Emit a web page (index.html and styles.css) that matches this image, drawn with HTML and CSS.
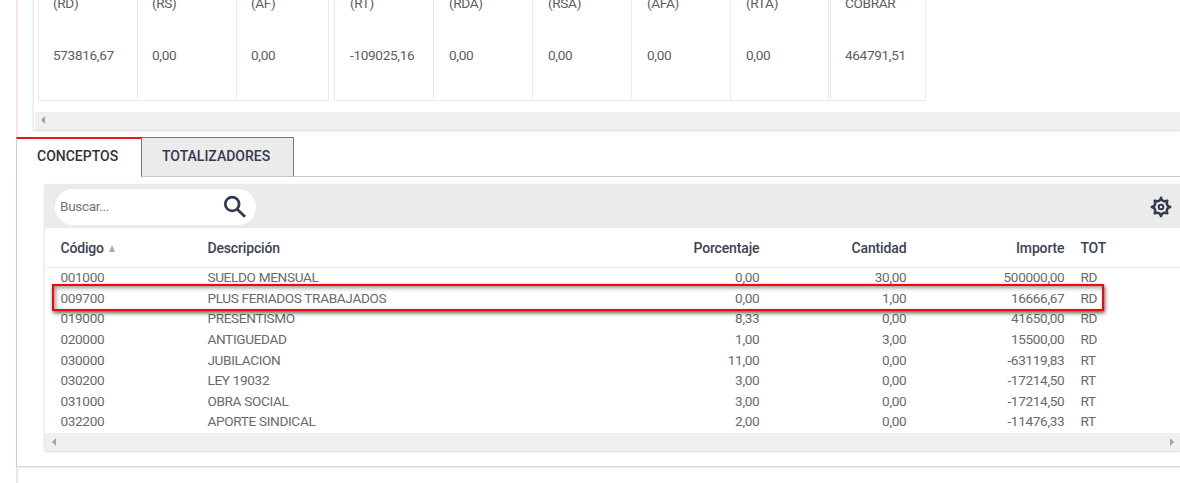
FILE: index.html
```html
<!DOCTYPE html>
<html lang="es">
<head>
<meta charset="utf-8">
<title>Conceptos</title>
<link rel="stylesheet" href="styles.css">
</head>
<body>
<section class="summary">
  <div class="summary-card">
    <div class="groups">
      <div class="group g1">
        <div class="cell"><span>(RD)</span><span>573816,67</span></div>
        <div class="cell"><span>(RS)</span><span>0,00</span></div>
        <div class="cell"><span>(AF)</span><span>0,00</span></div>
      </div>
      <div class="group g2">
        <div class="cell"><span>(RT)</span><span>-109025,16</span></div>
        <div class="cell"><span>(RDA)</span><span>0,00</span></div>
        <div class="cell"><span>(RSA)</span><span>0,00</span></div>
        <div class="cell"><span>(AFA)</span><span>0,00</span></div>
        <div class="cell"><span>(RTA)</span><span>0,00</span></div>
      </div>
      <div class="group g3">
        <div class="cell"><span>COBRAR</span><span>464791,51</span></div>
      </div>
    </div>
    <div class="scrollbar"><i class="arrow-left"></i></div>
  </div>
</section>
<nav class="tabs">
  <div class="tab active">CONCEPTOS</div>
  <div class="tab">TOTALIZADORES</div>
  <div class="tab-rest"></div>
</nav>
<main class="panel">
  <div class="grid-card">
    <div class="toolbar">
      <div class="search"><span>Buscar...</span>
        <svg width="24" height="24" viewBox="0 0 24 24" fill="none" stroke="#343a50" stroke-width="2.8"><circle cx="9.2" cy="9" r="6.9"/><path d="M14.2 14.2L22 21.8"/></svg>
      </div>
      <svg class="gear" width="22" height="22" viewBox="0 0 22 22" fill="none" stroke="#343a50" stroke-width="2.5" stroke-linejoin="round"><path d="M11 1.8Q11.8 4.6 13.4 5Q15 5.4 17.3 4.7Q16.6 7 17 8.6Q17.4 10.2 20.2 11Q17.4 11.8 17 13.4Q16.6 15 17.3 17.3Q15 16.6 13.4 17Q11.8 17.4 11 20.2Q10.2 17.4 8.6 17Q7 16.6 4.7 17.3Q5.4 15 5 13.4Q4.6 11.8 1.8 11Q4.6 10.2 5 8.6Q5.4 7 4.7 4.7Q7 5.4 8.6 5Q10.2 4.6 11 1.8Z"/><circle cx="11" cy="11" r="2.3" stroke-width="2"/></svg>
    </div>
    <div class="row head"><span>Código<i class="sort"></i></span><span>Descripción</span><span>Porcentaje</span><span>Cantidad</span><span>Importe</span><span>TOT</span></div>
    <div class="rows">
      <div class="row"><span>001000</span><span>SUELDO MENSUAL</span><span>0,00</span><span>30,00</span><span>500000,00</span><span>RD</span></div>
      <div class="row"><span>009700</span><span>PLUS FERIADOS TRABAJADOS</span><span>0,00</span><span>1,00</span><span>16666,67</span><span>RD</span><b class="highlight"></b></div>
      <div class="row"><span>019000</span><span>PRESENTISMO</span><span>8,33</span><span>0,00</span><span>41650,00</span><span>RD</span></div>
      <div class="row"><span>020000</span><span>ANTIGUEDAD</span><span>1,00</span><span>3,00</span><span>15500,00</span><span>RD</span></div>
      <div class="row"><span>030000</span><span>JUBILACION</span><span>11,00</span><span>0,00</span><span>-63119,83</span><span>RT</span></div>
      <div class="row"><span>030200</span><span>LEY 19032</span><span>3,00</span><span>0,00</span><span>-17214,50</span><span>RT</span></div>
      <div class="row"><span>031000</span><span>OBRA SOCIAL</span><span>3,00</span><span>0,00</span><span>-17214,50</span><span>RT</span></div>
      <div class="row"><span>032200</span><span>APORTE SINDICAL</span><span>2,00</span><span>0,00</span><span>-11476,33</span><span>RT</span></div>
    </div>
    <div class="scrollbar"><i class="arrow-left"></i><i class="arrow-right"></i></div>
  </div>
</main>
<div class="next-card"></div>
</body>
</html>
```
FILE: styles.css
```css
* { box-sizing: border-box; }
body {
  margin: 0;
  height: 483px;
  overflow: hidden;
  display: flex;
  flex-direction: column;
  padding-left: 16px;
  background: #fff;
  font: 13.6px/20px Roboto, sans-serif;
  letter-spacing: -.33px;
  color: #6a6a6a;
}
.summary {
  height: 137px;
  flex: none;
  border-left: 2px solid #fde3e0;
  padding-left: 15px;
}
.summary-card {
  height: 130px;
  border-left: 1px solid #ececec;
  padding-left: 1px;
  box-shadow: 0 1px 2px rgba(0, 0, 0, .16);
}
.groups {
  display: flex;
  height: 112px;
  padding-left: 3px;
}
.group {
  display: flex;
  height: 101px;
  border: 1px solid #ebebeb;
  border-top: 0;
  color: #5e5e5e;
}
.g1 { width: 291px; margin-right: 5px; }
.g2 { width: 495px; margin-right: 1px; }
.g2 .cell { padding-left: 15px; }
.g3 { width: 96px; }
.cell {
  width: 99px;
  flex: none;
  padding: 0 0 0 14px;
  border-right: 1px solid #ebebeb;
  display: flex;
  flex-direction: column;
  gap: 32px;
  margin-top: -7px;
}
.cell:last-child { border-right: 0; width: 90px; }
.scrollbar {
  height: 18px;
  background: #efefef;
  display: flex;
  align-items: center;
  justify-content: space-between;
  padding: 0 6px 1px;
}
.summary .scrollbar { padding-bottom: 2px; }
.arrow-left, .arrow-right {
  border: 4px solid transparent;
  border-left-width: 0;
  border-right: 4px solid #a3a3a3;
}
.arrow-right {
  border-right-width: 0;
  border-left: 4px solid #a3a3a3;
}
.tabs {
  display: flex;
  height: 40px;
  flex: none;
  font-size: 14px;
  font-weight: 500;
  letter-spacing: 0;
  color: #343a50;
}
.tab {
  width: 153px;
  padding: 8px 0 0 20px;
  background: #ebebeb;
  border: 1px solid #777;
  border-bottom-color: #c9c9c9;
}
.tab.active {
  width: 125px;
  padding: 7px 0 0 20px;
  background: #fff;
  border: 0;
  border-top: 2px solid #f0141e;
  border-left: 1px solid #ccc;
  color: #333;
}
.tab-rest { flex: 1; border-bottom: 1px solid #c9c9c9; }
.panel {
  height: 290px;
  flex: none;
  padding: 7px 0 0 27px;
  border-left: 1px solid #ccc;
  border-bottom: 1px solid #d6d6d6;
  box-shadow: 0 1px 1px #eee;
}
.grid-card {
  height: 267px;
  border-left: 1px solid #ececec;
  border-radius: 2px 0 0 2px;
  box-shadow: 0 1px 2px rgba(0, 0, 0, .16);
}
.grid-card .scrollbar { padding-left: 7px; }
.toolbar {
  height: 44px;
  background: #ebebeb;
  display: flex;
  align-items: center;
  justify-content: space-between;
  padding: 0 8px 0 10px;
}
.search {
  width: 201px;
  height: 36px;
  margin-top: 2px;
  border-radius: 18px;
  background: #fff;
  display: flex;
  align-items: center;
  justify-content: space-between;
  padding: 0 9px 0 5px;
  color: #757575;
}
.search span { padding-bottom: 2px; }
.gear { margin-top: 2px; }
.row {
  position: relative;
  display: grid;
  grid-template-columns: 147px 440px 112px 147px 158px 1fr;
  height: 20.625px;
  padding: 0 0 0 15.4px;
  line-height: 19px;
}
.row span:nth-child(3), .row span:nth-child(4), .row span:nth-child(5) { text-align: right; }
.row span:nth-child(6) { padding-left: 16px; }
.row.head {
  height: 40px;
  padding-top: 10px;
  line-height: 20px;
  border-bottom: 1px solid #ececec;
  font-size: 14px;
  font-weight: 500;
  letter-spacing: -.15px;
  color: #3c4254;
}
.sort {
  display: inline-block;
  margin-left: 5px;
  position: relative;
  top: -1px;
  border: 3.5px solid transparent;
  border-top: 0;
  border-bottom: 7px solid #aaa;
}
.highlight {
  position: absolute;
  left: 7px;
  top: -5px;
  width: 1052px;
  height: 27px;
  border: 2px solid #f90505;
  box-shadow: 1px 2px 4px rgba(0, 0, 0, .65), inset 2px 2px 4px rgba(0, 0, 0, .4);
  z-index: 1;
}
.next-card {
  height: 15px;
  margin-top: 1px;
  border-left: 2px solid #e8e8e8;
}
```
